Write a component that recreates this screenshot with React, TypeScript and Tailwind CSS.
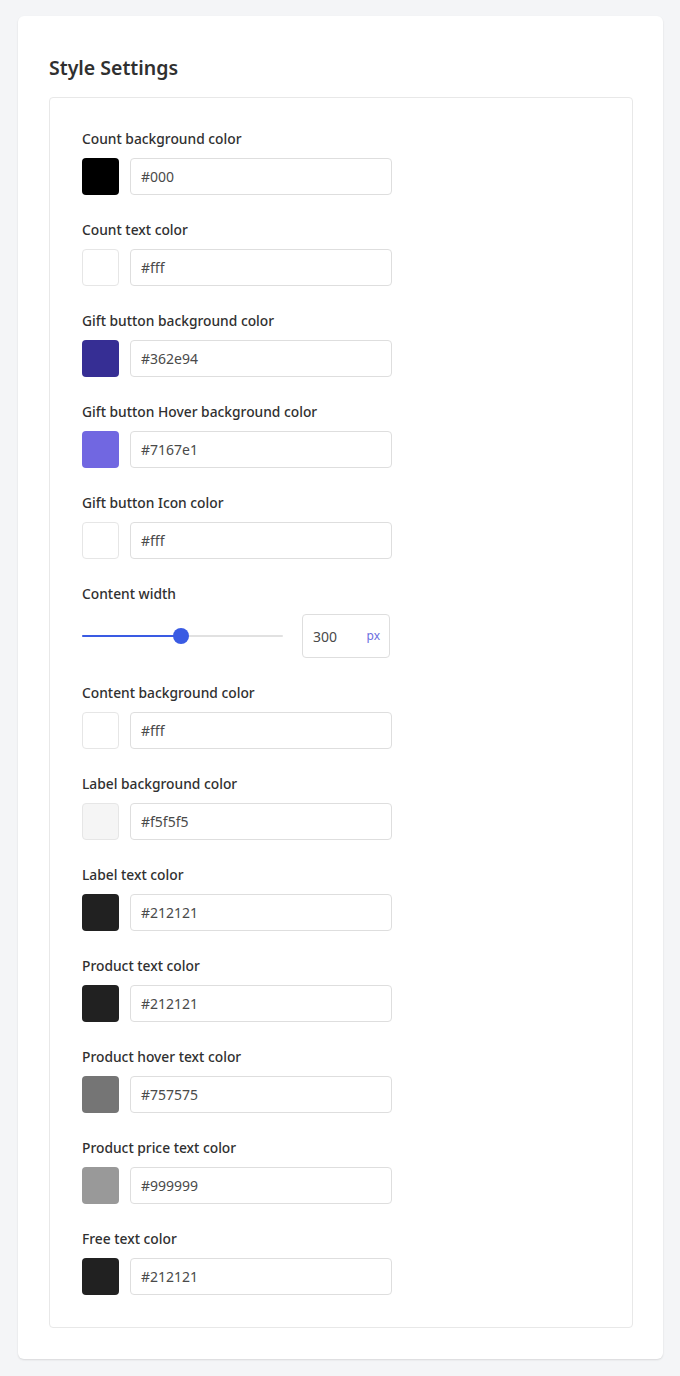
import React from "react";

type ColorField = { label: string; value: string; swatch: string; light?: boolean };

const before: ColorField[] = [
  { label: "Count background color", value: "#000", swatch: "bg-[#000000]" },
  { label: "Count text color", value: "#fff", swatch: "bg-[#ffffff]", light: true },
  { label: "Gift button background color", value: "#362e94", swatch: "bg-[#362e94]" },
  { label: "Gift button Hover background color", value: "#7167e1", swatch: "bg-[#7167e1]" },
  { label: "Gift button Icon color", value: "#fff", swatch: "bg-[#ffffff]", light: true },
];

const after: ColorField[] = [
  { label: "Content background color", value: "#fff", swatch: "bg-[#ffffff]", light: true },
  { label: "Label background color", value: "#f5f5f5", swatch: "bg-[#f5f5f5]", light: true },
  { label: "Label text color", value: "#212121", swatch: "bg-[#212121]" },
  { label: "Product text color", value: "#212121", swatch: "bg-[#212121]" },
  { label: "Product hover text color", value: "#757575", swatch: "bg-[#757575]" },
  { label: "Product price text color", value: "#999999", swatch: "bg-[#999999]" },
  { label: "Free text color", value: "#212121", swatch: "bg-[#212121]" },
];

function ColorRow({ field }: { field: ColorField }) {
  return (
    <div className="flex flex-col gap-[9px]">
      <span className="text-[13.8px] leading-5 font-medium text-[#303030]">{field.label}</span>
      <div className="flex items-center gap-[11px]">
        <div
          className={`w-[37px] h-[37px] rounded-[4px] ${field.swatch} ${
            field.light ? "border border-[#e6e6e6]" : ""
          }`}
        />
        <div className="w-[262px] h-[37px] rounded-[4px] border border-[#dedede] bg-white flex items-center px-[10px] text-[14px] text-[#4a4a4a]">
          {field.value}
        </div>
      </div>
    </div>
  );
}

function WidthRow() {
  const pct = 49.5;
  return (
    <div className="flex flex-col gap-[10px]">
      <span className="text-[13.8px] leading-5 font-medium text-[#303030]">Content width</span>
      <div className="flex items-center gap-[19px]">
        <div className="relative w-[201px] h-[16px] flex items-center">
          <div className="w-full h-[2px] bg-[#e1e1e1] rounded-full" />
          <div className="absolute left-0 h-[2px] bg-[#3a5be3] rounded-full" style={{ width: `${pct}%` }} />
          <div
            className="absolute w-[16px] h-[16px] rounded-full bg-[#3a5be3] -translate-x-1/2"
            style={{ left: `${pct}%` }}
          />
        </div>
        <div className="w-[88px] h-[44px] rounded-[4px] border border-[#dedede] flex items-center justify-between pl-[10px] pr-[9px]">
          <span className="text-[14px] text-[#4a4a4a]">300</span>
          <span className="text-[12px] text-[#6b6ee0]">px</span>
        </div>
      </div>
    </div>
  );
}

export default function App() {
  return (
    <div className="min-h-[1376px] bg-[#f4f5f7] pl-[18px] pr-[17px] pt-[16px] font-['Noto_Sans',sans-serif]">
      <div className="bg-white rounded-[6px] shadow-[0_1px_2px_rgba(0,0,0,0.12)] pl-[31px] pr-[30px] pt-[38px] pb-[31px]">
        <h2 className="text-[19.5px] leading-7 font-semibold text-[#303030] mb-[15px]">Style Settings</h2>
        <div className="border border-[#e8e8e8] rounded-[4px] px-[32px] pt-[31px] pb-[32px] flex flex-col gap-[25px]">
          {before.map((f) => (
            <ColorRow key={f.label} field={f} />
          ))}
          <WidthRow />
          {after.map((f) => (
            <ColorRow key={f.label} field={f} />
          ))}
        </div>
      </div>
    </div>
  );
}
